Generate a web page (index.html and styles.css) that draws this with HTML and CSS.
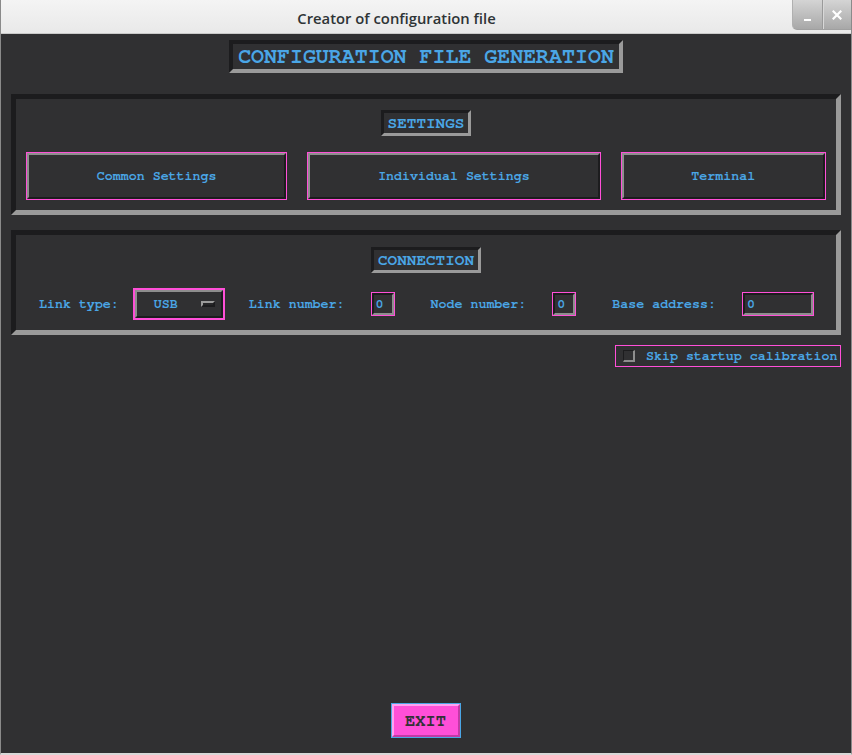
FILE: index.html
```html
<!DOCTYPE html>
<html>
<head>
<meta charset="utf-8">
<title>Creator of configuration file</title>
<link rel="stylesheet" href="styles.css">
</head>
<body>
<div class="window">
  <div class="titlebar">
    <div class="title">Creator of configuration file</div>
    <div class="wm-buttons">
      <div class="wm-btn wm-min"><span class="min-bar"></span></div>
      <div class="wm-btn wm-close">
        <svg width="10" height="10" viewBox="0 0 10 10"><path d="M1.5 1.5 L8.5 8.5 M8.5 1.5 L1.5 8.5" stroke="#ffffff" stroke-width="2.2" stroke-linecap="square"/></svg>
      </div>
    </div>
  </div>
  <div class="app">
    <div class="heading-row">
      <div class="heading">CONFIGURATION FILE GENERATION</div>
    </div>

    <div class="frame settings">
      <div class="label-row"><div class="frame-label">SETTINGS</div></div>
      <div class="btn-row">
        <div class="btn"><div class="btn-in">Common Settings</div></div>
        <div class="btn"><div class="btn-in">Individual Settings</div></div>
        <div class="btn"><div class="btn-in">Terminal</div></div>
      </div>
    </div>

    <div class="frame connection">
      <div class="label-row"><div class="frame-label">CONNECTION</div></div>
      <div class="conn-row">
        <span class="lbl lbl-link">Link type:</span>
        <div class="select"><div class="select-in"><span class="select-val">USB</span><span class="select-ind"></span></div></div>
        <span class="lbl lbl-linknum">Link number:</span>
        <div class="field small"><div class="field-in">0</div></div>
        <span class="lbl lbl-node">Node number:</span>
        <div class="field small"><div class="field-in">0</div></div>
        <span class="lbl lbl-base">Base address:</span>
        <div class="field wide"><div class="field-in">0</div></div>
      </div>
    </div>

    <div class="check-row">
      <div class="check">
        <span class="check-box"></span>
        <span class="check-text">Skip startup calibration</span>
      </div>
    </div>

    <div class="exit-row">
      <div class="exit"><div class="exit-in">EXIT</div></div>
    </div>
  </div>
</div>
</body>
</html>
```

FILE: styles.css
```css
html, body {
  margin: 0;
  padding: 0;
  width: 852px;
  height: 755px;
  overflow: hidden;
  background: #303032;
}

.window {
  width: 852px;
  height: 755px;
  box-sizing: border-box;
  display: flex;
  flex-direction: column;
  border-left: 1px solid #8a8a8a;
  border-right: 1px solid #8a8a8a;
  border-bottom: 2px solid #d8d8d8;
  background: #303032;
}

.titlebar {
  height: 34px;
  flex: 0 0 34px;
  display: flex;
  align-items: flex-start;
  background: linear-gradient(#f4f4f4, #e9e9e9);
  border-bottom: 1px solid #c9c9c9;
  box-sizing: border-box;
}

.title {
  flex: 1;
  text-align: center;
  font-family: "Open Sans", "DejaVu Sans", sans-serif;
  font-size: 14.8px;
  font-weight: 600;
  color: #2e3436;
  line-height: 36px;
}

.wm-buttons {
  display: flex;
  height: 30px;
  width: 59px;
  border-bottom-left-radius: 5px;
  overflow: hidden;
  background: linear-gradient(#d4d4d4, #a8a8a8);
  border-left: 1px solid #b0b0b0;
  border-bottom: 1px solid #a0a0a0;
  box-sizing: border-box;
}

.wm-btn {
  flex: 1;
  display: flex;
  align-items: center;
  justify-content: center;
}

.wm-min {
  border-right: 1px solid #9a9a9a;
  box-shadow: 1px 0 0 #d8d8d8;
  align-items: flex-end;
  padding-bottom: 8px;
  box-sizing: border-box;
}

.min-bar {
  display: block;
  width: 7px;
  height: 2px;
  background: #ffffff;
}

.app {
  flex: 1;
  display: flex;
  flex-direction: column;
  font-family: "Courier 10 Pitch", "Nimbus Mono PS", "Nimbus Mono L", "FreeMono", "Liberation Mono", "Courier New", monospace;
  font-weight: bold;
  color: #4aa6e6;
}

.heading-row {
  display: flex;
  justify-content: center;
  padding-top: 6px;
}

.heading {
  width: 394px;
  height: 33px;
  box-sizing: border-box;
  border: 4px solid;
  border-color: #1c1c1e #9a9a9a #9a9a9a #1c1c1e;
  font-size: 21.6px;
  line-height: 25px;
  text-align: center;
  white-space: nowrap;
}

.frame {
  margin: 0 10px;
  border: 5px solid;
  border-color: #1c1c1e #9a9a9a #9a9a9a #1c1c1e;
  display: flex;
  flex-direction: column;
}

.settings {
  margin-top: 21px;
  height: 121px;
  box-sizing: border-box;
}

.connection {
  margin-top: 15px;
  height: 105px;
  box-sizing: border-box;
}

.label-row {
  display: flex;
  justify-content: center;
  padding-top: 11px;
}

.connection .label-row {
  padding-top: 12px;
}

.frame-label {
  border: 3px solid;
  border-color: #1c1c1e #9a9a9a #9a9a9a #1c1c1e;
  height: 26px;
  box-sizing: border-box;
  padding: 0 4px;
  font-size: 16px;
  line-height: 20px;
}

.btn-row {
  display: flex;
  gap: 20px;
  padding: 16px 10px 0;
}

.btn {
  flex: 1 1 auto;
  height: 48px;
  box-sizing: border-box;
  border: 1px solid #ff4fd8;
  display: flex;
}

.btn-in {
  flex: 1;
  border: 2px solid;
  border-color: #8e8e8e #1c1c1e #1c1c1e #8e8e8e;
  display: flex;
  align-items: center;
  justify-content: center;
  font-size: 13.3px;
  white-space: nowrap;
}

.conn-row {
  display: flex;
  align-items: center;
  padding-top: 15px;
  height: 32px;
  font-size: 13.3px;
}

.lbl {
  white-space: nowrap;
}

.lbl-link { margin-left: 23px; margin-right: 14px; }
.lbl-linknum { margin-left: 24px; margin-right: 26px; }
.lbl-node { margin-left: 36px; margin-right: 26px; }
.lbl-base { margin-left: 36px; margin-right: 26px; }

.select {
  width: 92px;
  height: 32px;
  box-sizing: border-box;
  border: 2px solid #ff4fd8;
  display: flex;
}

.select-in {
  flex: 1;
  border: 2px solid;
  border-color: #8e8e8e #1c1c1e #1c1c1e #8e8e8e;
  display: flex;
  align-items: center;
  padding-left: 17px;
}

.select-val {
  flex: 1;
}

.select-ind {
  width: 14px;
  height: 6px;
  box-sizing: border-box;
  border: 2px solid;
  border-color: #9a9a9a #1c1c1e #1c1c1e #9a9a9a;
  background: #262628;
  margin-right: 6px;
}

.field {
  height: 24px;
  box-sizing: border-box;
  border: 1px solid #ff4fd8;
  display: flex;
}

.field.small { width: 24px; }
.field.wide { width: 72px; }

.field-in {
  flex: 1;
  border: 2px solid;
  border-color: #1c1c1e #8e8e8e #8e8e8e #1c1c1e;
  padding-left: 2px;
  font-size: 13.3px;
  line-height: 18px;
}

.check-row {
  display: flex;
  justify-content: flex-end;
  padding: 10px 10px 0 0;
}

.check {
  width: 226px;
  height: 22px;
  box-sizing: border-box;
  border: 1px solid #ff4fd8;
  display: flex;
  align-items: center;
  font-size: 13.3px;
}

.check-box {
  width: 12px;
  height: 12px;
  box-sizing: border-box;
  margin-left: 7px;
  margin-right: 11px;
  border: 1px solid;
  border-width: 1px 2px 2px 1px;
  border-color: #1c1c1e #8e8e8e #8e8e8e #1c1c1e;
}

.check-text {
  white-space: nowrap;
}

.exit-row {
  margin-top: auto;
  display: flex;
  justify-content: center;
  padding-bottom: 15px;
}

.exit {
  width: 70px;
  height: 35px;
  box-sizing: border-box;
  border: 1px solid #4aa6e6;
  display: flex;
  margin-left: -1px;
}

.exit-in {
  flex: 1;
  border: 2px solid;
  border-color: #ffa2f0 #c23aa5 #c23aa5 #ffa2f0;
  background: #ff4fd8;
  color: #333236;
  font-size: 17px;
  display: flex;
  align-items: center;
  justify-content: center;
}
```
